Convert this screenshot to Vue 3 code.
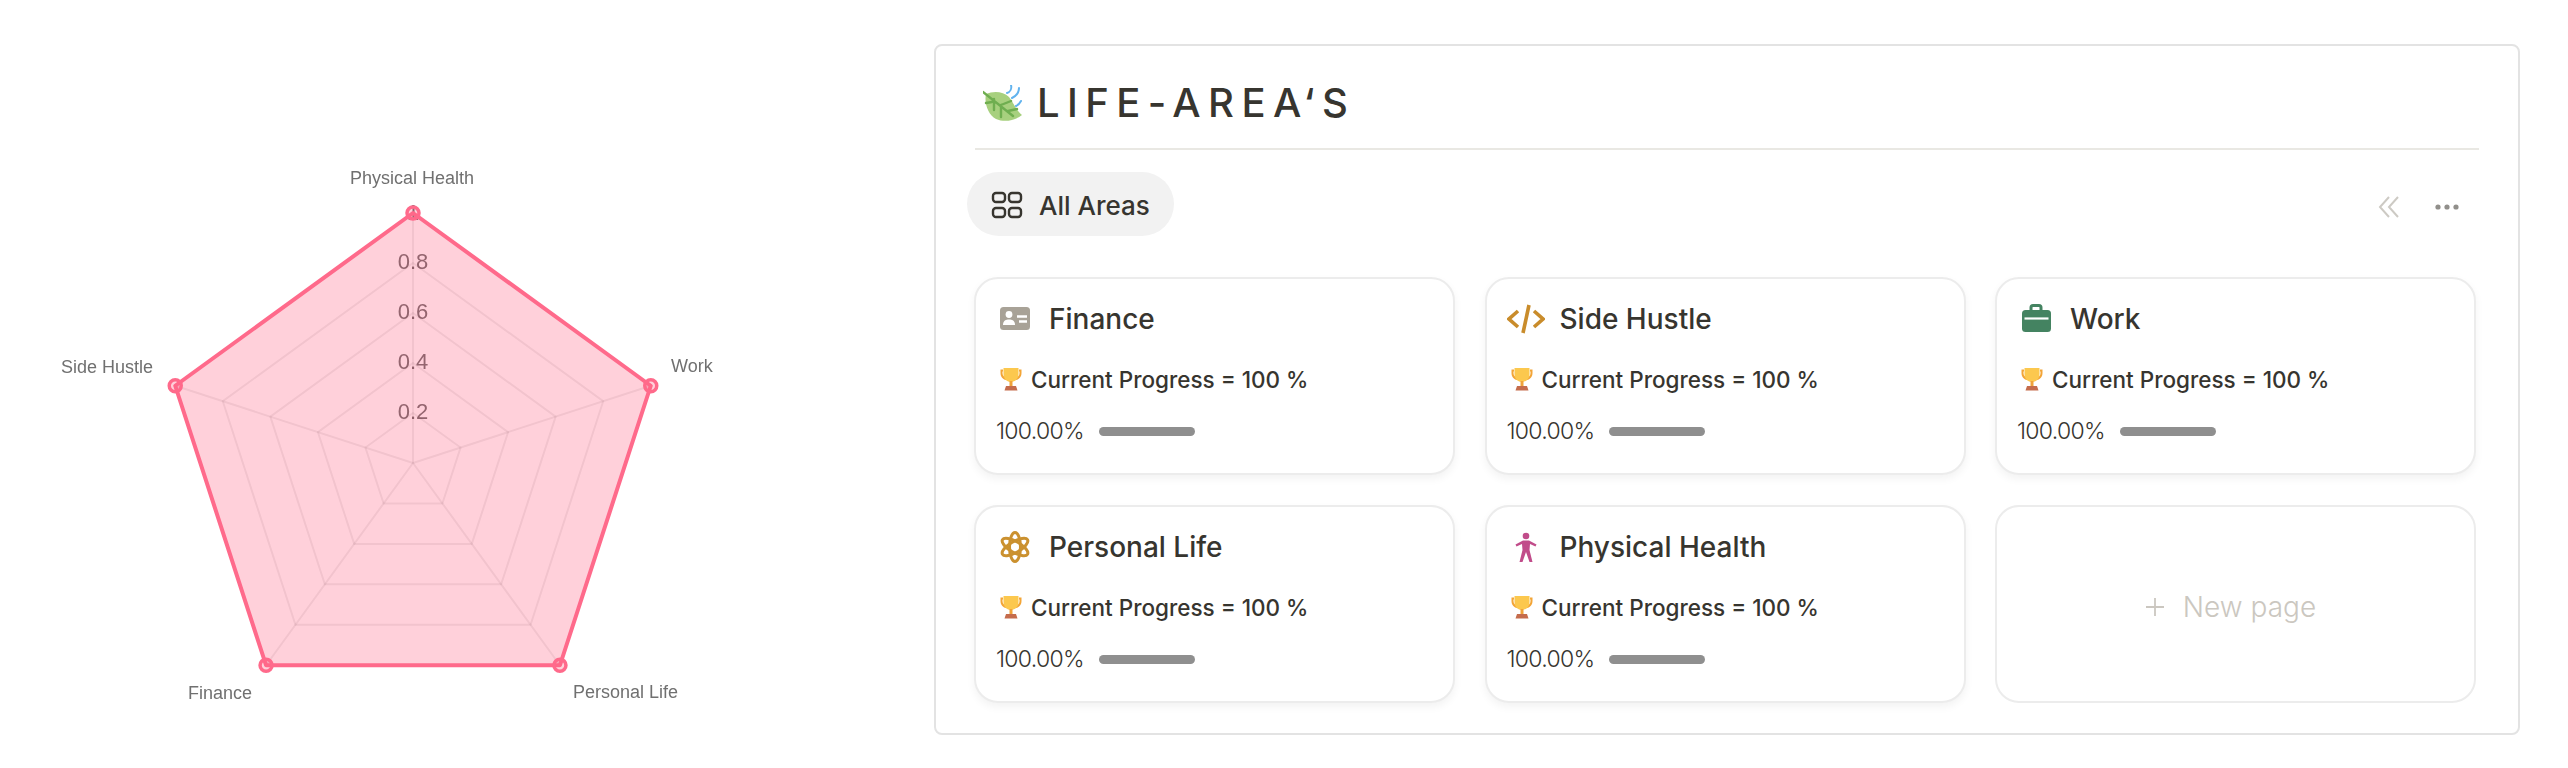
<template>
  <div class="page">
    <div class="chart-side">
      <svg class="radar" width="934" height="768" viewBox="0 0 934 768">
        <text v-for="t in ticks" :key="t.label" class="tick" x="413" :y="t.y" text-anchor="middle" dominant-baseline="central">{{ t.label }}</text>
        <polygon v-for="r in rings" :key="r" class="ring" :points="ringPoints(r)" />
        <line v-for="p in spokes" :key="p.x" class="ring" x1="413" y1="463" :x2="p.x" :y2="p.y" />
        <polygon class="area" :points="ringPoints(1)" />
        <circle v-for="p in spokes" :key="'pt' + p.x" class="point" :cx="p.x" :cy="p.y" r="6" />
        <text v-for="l in axisLabels" :key="l.text" class="axis-label" :x="l.x" :y="l.y" :text-anchor="l.anchor" dominant-baseline="central">{{ l.text }}</text>
      </svg>
    </div>

    <div class="panel">
      <div class="panel-head">
        <svg class="leaf" width="40" height="37" viewBox="0 0 40 37">
          <path d="M3 9C10 6 20 6 26 12C30 17 33 25 39 30C33 35 22 38 13 34C5 30 1 18 3 9Z" fill="#a7d07e" />
          <path d="M0 7L30 31M11 14L11 25M18 20L18 32M18 20L28 16M25 26L34 24M9 17L3 18" stroke="#6fae50" stroke-width="2.4" fill="none" stroke-linecap="round" />
          <path d="M24 8C27 7 29 4 28 0M29 13C33 11 36 8 36 3M33 21C35 20 37 18 38 16" stroke="#62b3ee" stroke-width="2" fill="none" stroke-linecap="round" />
        </svg>
        <h1>LIFE-AREA‘S</h1>
      </div>

      <div class="toolbar">
        <div class="tab">
          <svg width="32" height="28" viewBox="0 0 32 28" fill="none" stroke="#37352f" stroke-width="2.4">
            <rect x="2" y="2" width="12" height="9" rx="3" />
            <rect x="18" y="2" width="12" height="9" rx="3" />
            <rect x="2" y="17" width="12" height="9" rx="3" />
            <rect x="18" y="17" width="12" height="9" rx="3" />
          </svg>
          <span>All Areas</span>
        </div>
        <div class="tools">
          <svg width="22" height="22" viewBox="0 0 22 22" fill="none" stroke="#cdcac4" stroke-width="2">
            <path d="M11 1L2 11L11 21M20 1L11 11L20 21" />
          </svg>
          <svg width="24" height="6" viewBox="0 0 24 6" fill="#918f8b">
            <circle cx="3" cy="3" r="2.6" />
            <circle cx="12" cy="3" r="2.6" />
            <circle cx="21" cy="3" r="2.6" />
          </svg>
        </div>
      </div>

      <div class="grid">
        <div v-for="area in areas" :key="area.name" class="card">
          <div class="card-title">
            <svg class="card-icon" width="38" height="32" viewBox="0 0 38 32">
              <template v-if="area.icon == 'id'">
                <rect x="4" y="4" width="30" height="23" rx="3.5" fill="#a8a297" />
                <circle cx="13" cy="11.5" r="3.4" fill="#fff" />
                <path d="M7 22C7 17.5 10 16.5 13 16.5C16 16.5 19 17.5 19 22Z" fill="#fff" />
                <path d="M21 13.5H31M23 18.5H31" stroke="#fff" stroke-width="2.4" />
              </template>
              <template v-else-if="area.icon == 'code'">
                <path d="M11 8L2 16L11 24M27 8L36 16L27 24M22 2L16 30" stroke="#c98c2b" stroke-width="3.6" fill="none" />
              </template>
              <template v-else-if="area.icon == 'work'">
                <path d="M14 7V4.5A2 2 0 0 1 16 2.5H22A2 2 0 0 1 24 4.5V7" stroke="#448361" stroke-width="3" fill="none" />
                <rect x="5" y="7" width="29" height="22" rx="3.5" fill="#448361" />
                <path d="M7.5 15.5H31.5" stroke="#fff" stroke-width="2.2" />
              </template>
              <template v-else-if="area.icon == 'atom'">
                <g fill="none" stroke="#cb912f" stroke-width="3">
                  <ellipse cx="19" cy="16" rx="5.5" ry="14.5" />
                  <ellipse cx="19" cy="16" rx="5.5" ry="14.5" transform="rotate(60 19 16)" />
                  <ellipse cx="19" cy="16" rx="5.5" ry="14.5" transform="rotate(120 19 16)" />
                </g>
              </template>
              <template v-else>
                <circle cx="19" cy="5" r="3.3" fill="#c14c8a" />
                <path d="M16 9.5H22L29.5 13.5L28.5 15.5L23 13L22.5 19L25.5 31H22.5L19 21L15.5 31H12.5L15.5 19L15 13L9.5 15.5L8.5 13.5Z" fill="#c14c8a" />
              </template>
            </svg>
            <span>{{ area.name }}</span>
          </div>
          <div class="card-progress">
            <svg class="trophy" width="24" height="24" viewBox="0 0 24 24">
              <path d="M4 2.5H1.5V6C1.5 10 4 12.5 7 13V10.5C5 10 3.5 8.5 3.5 6V4.5H4ZM20 2.5H22.5V6C22.5 10 20 12.5 17 13V10.5C19 10 20.5 8.5 20.5 6V4.5H20Z" fill="#f3a537" />
              <path d="M4.5 1H19.5V7C19.5 12 16 15 12 15C8 15 4.5 12 4.5 7Z" fill="#fcc84e" />
              <rect x="10.5" y="14" width="3" height="5" fill="#f0a33a" />
              <path d="M7 19H17L18.5 23.5H5.5Z" fill="#c56c4c" />
            </svg>
            <span>Current Progress = 100 %</span>
          </div>
          <div class="card-value">
            <span>100.00%</span>
            <div class="bar"><div class="bar-fill" :style="{ width: area.progress + '%' }"></div></div>
          </div>
        </div>
        <div class="card new-page">
          <svg width="20" height="20" viewBox="0 0 20 20" stroke="#cbc7c0" stroke-width="1.8">
            <path d="M10 1V19M1 10H19" />
          </svg>
          <span>New page</span>
        </div>
      </div>
    </div>
  </div>
</template>

<script setup>
const areas = [
  { name: "Finance", icon: "id", progress: 100 },
  { name: "Side Hustle", icon: "code", progress: 100 },
  { name: "Work", icon: "work", progress: 100 },
  { name: "Personal Life", icon: "atom", progress: 100 },
  { name: "Physical Health", icon: "person", progress: 100 },
];

const cx = 413;
const cy = 463;
const radius = 250;
const rings = [0.2, 0.4, 0.6, 0.8, 1];

const vertex = (i, r) => {
  const a = (-90 + i * 72) * (Math.PI / 180);
  return { x: cx + Math.cos(a) * radius * r, y: cy + Math.sin(a) * radius * r };
};

const spokes = [0, 1, 2, 3, 4].map((i) => vertex(i, 1));

const ringPoints = (r) =>
  [0, 1, 2, 3, 4]
    .map((i) => {
      const p = vertex(i, r);
      return p.x + "," + p.y;
    })
    .join(" ");

const ticks = [
  { label: "1", y: 212 },
  { label: "0.8", y: 261 },
  { label: "0.6", y: 311 },
  { label: "0.4", y: 361 },
  { label: "0.2", y: 411 },
];

const axisLabels = [
  { text: "Physical Health", x: 412, y: 178, anchor: "middle" },
  { text: "Work", x: 671, y: 366, anchor: "start" },
  { text: "Personal Life", x: 573, y: 692, anchor: "start" },
  { text: "Finance", x: 252, y: 693, anchor: "end" },
  { text: "Side Hustle", x: 153, y: 367, anchor: "end" },
];
</script>

<style>
html,
body {
  background: #fff;
}
</style>

<style scoped>
.page {
  display: flex;
  align-items: flex-start;
  width: 2568px;
  height: 768px;
  overflow: hidden;
  background: #fff;
  font-family: Inter, "Noto Sans", sans-serif;
  color: #37352f;
}

.chart-side {
  flex: 0 0 934px;
}

.radar {
  display: block;
  filter: blur(0.6px);
}
.tick {
  font-family: "Liberation Sans", sans-serif;
  font-size: 22px;
  fill: #666;
}
.ring {
  fill: none;
  stroke: rgba(0, 0, 0, 0.08);
  stroke-width: 2;
}
.area {
  fill: rgba(255, 99, 132, 0.3);
  stroke: #ff6a8b;
  stroke-width: 4;
  stroke-linejoin: round;
}
.point {
  fill: rgba(255, 99, 132, 0.3);
  stroke: #ff6a8b;
  stroke-width: 3.5;
}
.axis-label {
  font-family: "Liberation Sans", sans-serif;
  font-size: 18px;
  fill: #707070;
}

.panel {
  box-sizing: border-box;
  width: 1586px;
  height: 691px;
  margin-top: 44px;
  padding: 32px 39px 0;
  background: #fff;
  border: 2px solid #e3e3e3;
  border-radius: 8px;
}

.panel-head {
  box-sizing: border-box;
  display: flex;
  align-items: center;
  gap: 14px;
  height: 72px;
  padding-left: 8px;
  padding-bottom: 20px;
  border-bottom: 2px solid #e9e8e3;
}
.panel-head h1 {
  margin: 0;
  font-size: 40px;
  font-weight: 500;
  letter-spacing: 7.4px;
  line-height: 50px;
  white-space: nowrap;
}

.toolbar {
  display: flex;
  align-items: center;
  justify-content: space-between;
  margin: 22px 0 0 -8px;
}
.tab {
  box-sizing: border-box;
  display: flex;
  align-items: center;
  gap: 16px;
  height: 64px;
  padding: 2px 24px 0;
  border-radius: 32px;
  background: #f2f2f2;
  font-size: 26px;
  font-weight: 500;
}
.tools {
  display: flex;
  align-items: center;
  gap: 35px;
  padding: 6px 20px 0 0;
}

.grid {
  display: grid;
  grid-template-columns: repeat(3, 481px);
  grid-template-rows: 198px 198px;
  gap: 30px 29.5px;
  margin: 41px 0 0 -1px;
}
.card {
  box-sizing: border-box;
  display: flex;
  flex-direction: column;
  padding: 20px 20px 0;
  border: 2px solid #ececec;
  border-radius: 24px;
  background: #fff;
  box-shadow: 0 4px 8px rgba(0, 0, 0, 0.05);
}
.card-title {
  display: flex;
  align-items: center;
  gap: 15px;
  height: 40px;
  font-size: 28px;
  font-weight: 500;
}
.card-progress {
  display: flex;
  align-items: center;
  gap: 8px;
  height: 30px;
  margin-top: 25px;
  padding-left: 3px;
  font-size: 22.5px;
  font-weight: 500;
  white-space: nowrap;
}
.card-value {
  display: flex;
  align-items: center;
  gap: 15px;
  height: 30px;
  margin-top: 22px;
  font-size: 23px;
  font-weight: 300;
  letter-spacing: -0.7px;
}
.bar {
  width: 96px;
  height: 9px;
  border-radius: 5px;
  background: #e6e6e6;
  overflow: hidden;
}
.bar-fill {
  height: 100%;
  background: #8f8f8f;
}

.new-page {
  flex-direction: row;
  align-items: center;
  justify-content: center;
  gap: 18px;
  padding: 6px 30px 0 20px;
  box-shadow: none;
  font-size: 28px;
  font-weight: 300;
  color: #cbc7c0;
}
</style>
